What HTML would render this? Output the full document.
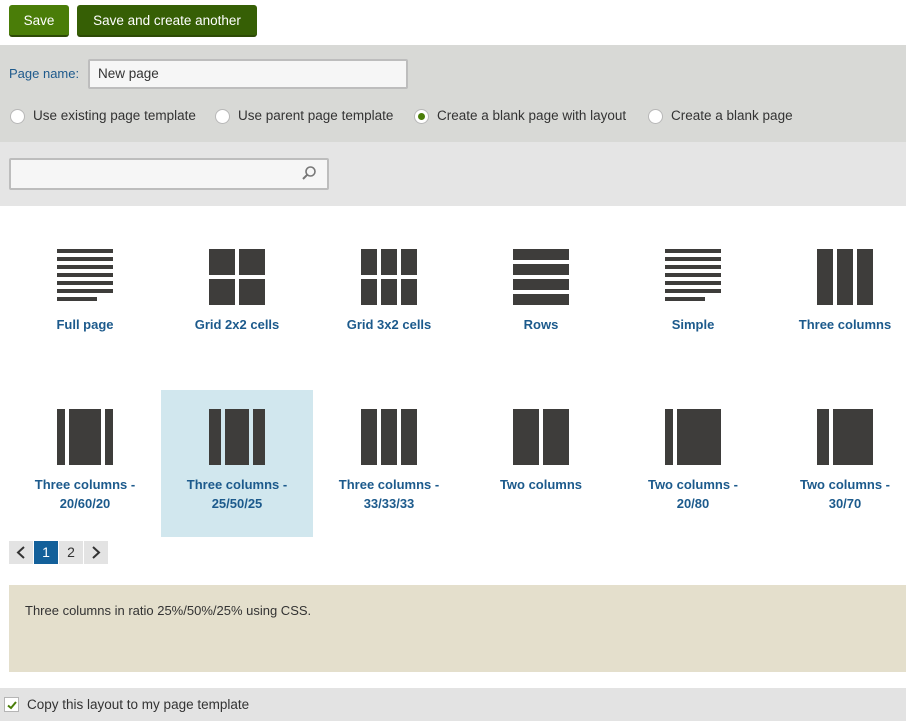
<!DOCTYPE html>
<html><head><meta charset="utf-8"><style>
*{margin:0;padding:0;box-sizing:border-box}
body{width:906px;height:721px;position:relative;background:#fff;font-family:"Liberation Sans",sans-serif;font-size:13px;color:#333;overflow:hidden}
.a{position:absolute}
.btn{position:absolute;top:5px;height:32px;color:#fff;font-size:13.5px;line-height:32px;text-align:center;border-radius:3px;border-bottom:2px solid #2d4a06}
.rad{position:absolute;top:109px;width:15px;height:15px;border-radius:50%;background:#fff;border:1px solid #b8b8b8}
.rl{position:absolute;top:108px;font-size:13.5px;color:#333}
.lab{position:absolute;width:152px;text-align:center;font-weight:bold;color:#1c5a8c;font-size:13px;line-height:19px}
.ic{position:absolute;width:56px;height:56px}
.ic i{position:absolute;background:#3e3d3b}
.pg{position:absolute;top:541px;width:24px;height:23px;background:#e3e3e3;text-align:center;line-height:23px;font-size:14px}
</style></head><body>
<div class="btn" style="left:9px;width:60px;background:#4a7d08">Save</div>
<div class="btn" style="left:77px;width:180px;background:#365f05">Save and create another</div>

<div class="a" style="left:0;top:45px;width:906px;height:97px;background:#d8d9d6"></div>
<div class="a" style="left:9px;top:66px;color:#1e5a8c;font-size:13px">Page name:</div>
<div class="a" style="left:88px;top:59px;width:320px;height:30px;background:#f6f6f6;border:2px solid #bdbdbd;border-radius:2px;padding-left:8px;line-height:26px;font-size:13.5px">New page</div>
<div class="rad" style="left:10px"></div><div class="rl" style="left:33px">Use existing page template</div>
<div class="rad" style="left:215px"></div><div class="rl" style="left:238px">Use parent page template</div>
<div class="rad" style="left:414px"><div class="a" style="left:3px;top:3px;width:7px;height:7px;border-radius:50%;background:#4a7d08"></div></div><div class="rl" style="left:437px">Create a blank page with layout</div>
<div class="rad" style="left:648px"></div><div class="rl" style="left:671px">Create a blank page</div>

<div class="a" style="left:0;top:142px;width:906px;height:64px;background:#e5e5e5"></div>
<div class="a" style="left:9px;top:158px;width:320px;height:32px;background:#f6f6f6;border:2px solid #bdbdbd;border-radius:2px"></div>
<svg class="a" style="left:301px;top:165px" width="16" height="16" viewBox="0 0 16 16"><circle cx="9.5" cy="6.5" r="4.5" fill="none" stroke="#777" stroke-width="1.6"/><path d="M6.3 9.7L2 14" stroke="#777" stroke-width="2"/></svg>

<!-- row 1 -->
<div class="ic" style="left:57px;top:249px"><i style="left:0;top:0;width:56px;height:4px"></i><i style="left:0;top:8px;width:56px;height:4px"></i><i style="left:0;top:16px;width:56px;height:4px"></i><i style="left:0;top:24px;width:56px;height:4px"></i><i style="left:0;top:32px;width:56px;height:4px"></i><i style="left:0;top:40px;width:56px;height:4px"></i><i style="left:0;top:48px;width:40px;height:4px"></i></div>
<div class="ic" style="left:209px;top:249px"><i style="left:0;top:0;width:26px;height:26px"></i><i style="left:30px;top:0;width:26px;height:26px"></i><i style="left:0;top:30px;width:26px;height:26px"></i><i style="left:30px;top:30px;width:26px;height:26px"></i></div>
<div class="ic" style="left:361px;top:249px"><i style="left:0;top:0;width:16px;height:26px"></i><i style="left:20px;top:0;width:16px;height:26px"></i><i style="left:40px;top:0;width:16px;height:26px"></i><i style="left:0;top:30px;width:16px;height:26px"></i><i style="left:20px;top:30px;width:16px;height:26px"></i><i style="left:40px;top:30px;width:16px;height:26px"></i></div>
<div class="ic" style="left:513px;top:249px"><i style="left:0;top:0;width:56px;height:11px"></i><i style="left:0;top:15px;width:56px;height:11px"></i><i style="left:0;top:30px;width:56px;height:11px"></i><i style="left:0;top:45px;width:56px;height:11px"></i></div>
<div class="ic" style="left:665px;top:249px"><i style="left:0;top:0;width:56px;height:4px"></i><i style="left:0;top:8px;width:56px;height:4px"></i><i style="left:0;top:16px;width:56px;height:4px"></i><i style="left:0;top:24px;width:56px;height:4px"></i><i style="left:0;top:32px;width:56px;height:4px"></i><i style="left:0;top:40px;width:56px;height:4px"></i><i style="left:0;top:48px;width:40px;height:4px"></i></div>
<div class="ic" style="left:817px;top:249px"><i style="left:0;top:0;width:16px;height:56px"></i><i style="left:20px;top:0;width:16px;height:56px"></i><i style="left:40px;top:0;width:16px;height:56px"></i></div>
<div class="lab" style="left:9px;top:315px">Full page</div>
<div class="lab" style="left:161px;top:315px">Grid 2x2 cells</div>
<div class="lab" style="left:313px;top:315px">Grid 3x2 cells</div>
<div class="lab" style="left:465px;top:315px">Rows</div>
<div class="lab" style="left:617px;top:315px">Simple</div>
<div class="lab" style="left:769px;top:315px">Three columns</div>

<!-- row 2 -->
<div class="a" style="left:161px;top:390px;width:152px;height:147px;background:#d1e7ee"></div>
<div class="ic" style="left:57px;top:409px"><i style="left:0;top:0;width:8px;height:56px"></i><i style="left:12px;top:0;width:32px;height:56px"></i><i style="left:48px;top:0;width:8px;height:56px"></i></div>
<div class="ic" style="left:209px;top:409px"><i style="left:0;top:0;width:12px;height:56px"></i><i style="left:16px;top:0;width:24px;height:56px"></i><i style="left:44px;top:0;width:12px;height:56px"></i></div>
<div class="ic" style="left:361px;top:409px"><i style="left:0;top:0;width:16px;height:56px"></i><i style="left:20px;top:0;width:16px;height:56px"></i><i style="left:40px;top:0;width:16px;height:56px"></i></div>
<div class="ic" style="left:513px;top:409px"><i style="left:0;top:0;width:26px;height:56px"></i><i style="left:30px;top:0;width:26px;height:56px"></i></div>
<div class="ic" style="left:665px;top:409px"><i style="left:0;top:0;width:8px;height:56px"></i><i style="left:12px;top:0;width:44px;height:56px"></i></div>
<div class="ic" style="left:817px;top:409px"><i style="left:0;top:0;width:12px;height:56px"></i><i style="left:16px;top:0;width:40px;height:56px"></i></div>
<div class="lab" style="left:9px;top:475px">Three columns -<br>20/60/20</div>
<div class="lab" style="left:161px;top:475px">Three columns -<br>25/50/25</div>
<div class="lab" style="left:313px;top:475px">Three columns -<br>33/33/33</div>
<div class="lab" style="left:465px;top:475px">Two columns</div>
<div class="lab" style="left:617px;top:475px">Two columns -<br>20/80</div>
<div class="lab" style="left:769px;top:475px">Two columns -<br>30/70</div>

<div class="pg" style="left:9px"><svg width="24" height="23"><path d="M15 6L9 11.5L15 17" fill="none" stroke="#333" stroke-width="2"/></svg></div>
<div class="pg" style="left:34px;background:#13609a;color:#fff">1</div>
<div class="pg" style="left:59px">2</div>
<div class="pg" style="left:84px"><svg width="24" height="23"><path d="M9 6L15 11.5L9 17" fill="none" stroke="#333" stroke-width="2"/></svg></div>

<div class="a" style="left:9px;top:585px;width:897px;height:87px;background:#e4dfcc;padding:18px 0 0 16px;font-size:13px;color:#333">Three columns in ratio 25%/50%/25% using CSS.</div>

<div class="a" style="left:0;top:688px;width:906px;height:33px;background:#e3e3e3"></div>
<div class="a" style="left:4px;top:697px;width:15px;height:15px;background:#fff;border:1px solid #b5b5b5"><svg class="a" style="left:1px;top:1px" width="12" height="12"><path d="M2 6.5L5 9L10 3" fill="none" stroke="#4a7d08" stroke-width="2"/></svg></div>
<div class="a" style="left:27px;top:697px;font-size:13.5px">Copy this layout to my page template</div>
</body></html>
